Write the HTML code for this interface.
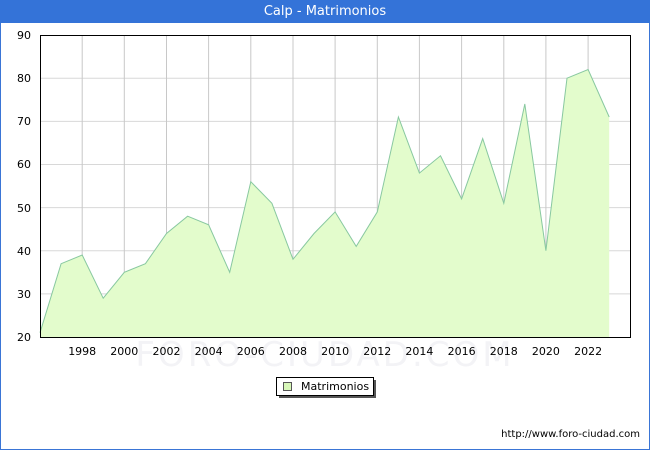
<!DOCTYPE html>
<html><head><meta charset="utf-8"><style>
html,body{margin:0;padding:0;background:#fff;}
body{width:650px;height:450px;position:relative;overflow:hidden;font-family:"DejaVu Sans","Liberation Sans",sans-serif;}
.frame{position:absolute;left:0;top:0;width:648px;height:448px;border:1px solid #3a75d6;}
.bar{position:absolute;left:0;top:0;width:650px;height:23px;background:#3473d8;color:#fff;font-size:13px;text-align:center;line-height:23px;}
svg{position:absolute;left:0;top:0;}
</style></head><body>
<div class="frame"></div>
<div class="bar">Calp - Matrimonios</div>
<svg width="650" height="450" font-family="DejaVu Sans, Liberation Sans, sans-serif" font-size="11">
<g stroke="#d8d8d8" stroke-width="1">
<line x1="40" y1="78.2" x2="630" y2="78.2"/><line x1="40" y1="121.4" x2="630" y2="121.4"/>
<line x1="40" y1="164.5" x2="630" y2="164.5"/><line x1="40" y1="207.6" x2="630" y2="207.6"/>
<line x1="40" y1="250.7" x2="630" y2="250.7"/><line x1="40" y1="293.9" x2="630" y2="293.9"/>
</g>
<g stroke="#c8c8c8" stroke-width="1">
<line x1="82.2" y1="35" x2="82.2" y2="337"/><line x1="124.3" y1="35" x2="124.3" y2="337"/>
<line x1="166.5" y1="35" x2="166.5" y2="337"/><line x1="208.6" y1="35" x2="208.6" y2="337"/>
<line x1="250.8" y1="35" x2="250.8" y2="337"/><line x1="293" y1="35" x2="293" y2="337"/>
<line x1="335.1" y1="35" x2="335.1" y2="337"/><line x1="377.3" y1="35" x2="377.3" y2="337"/>
<line x1="419.4" y1="35" x2="419.4" y2="337"/><line x1="461.6" y1="35" x2="461.6" y2="337"/>
<line x1="503.8" y1="35" x2="503.8" y2="337"/><line x1="545.9" y1="35" x2="545.9" y2="337"/>
<line x1="588.1" y1="35" x2="588.1" y2="337"/>
</g>
<polygon fill="#e3fccc" points="40,337 40,332.7 61.1,263.7 82.2,255 103.2,298.2 124.3,272.3 145.4,263.7 166.5,233.5 187.6,216.2 208.6,224.8 229.7,272.3 250.8,181.7 271.9,203.3 293,259.3 314,233.5 335.1,211.9 356.2,246.4 377.3,211.9 398.4,117 419.4,173.1 440.5,155.8 461.6,198.9 482.7,138.6 503.8,203.3 524.8,104 545.9,250.7 567,78.2 588.1,69.5 609.2,117 609.2,337"/>
<polyline fill="none" stroke="#88c8a0" stroke-width="1" points="40,332.7 61.1,263.7 82.2,255 103.2,298.2 124.3,272.3 145.4,263.7 166.5,233.5 187.6,216.2 208.6,224.8 229.7,272.3 250.8,181.7 271.9,203.3 293,259.3 314,233.5 335.1,211.9 356.2,246.4 377.3,211.9 398.4,117 419.4,173.1 440.5,155.8 461.6,198.9 482.7,138.6 503.8,203.3 524.8,104 545.9,250.7 567,78.2 588.1,69.5 609.2,117"/>
<text x="325" y="366" font-size="34" fill="#f3f3f6" text-anchor="middle" letter-spacing="3">FORO-CIUDAD.COM</text>
<rect x="40.5" y="35.5" width="590" height="302" fill="none" stroke="#000" stroke-width="1"/>
<g fill="#000" text-anchor="end">
<text x="31" y="39">90</text><text x="31" y="82">80</text><text x="31" y="125">70</text>
<text x="31" y="168">60</text><text x="31" y="212">50</text><text x="31" y="255">40</text>
<text x="31" y="298">30</text><text x="31" y="341">20</text>
</g>
<g fill="#000" text-anchor="middle">
<text x="82.2" y="355">1998</text><text x="124.3" y="355">2000</text><text x="166.5" y="355">2002</text>
<text x="208.6" y="355">2004</text><text x="250.8" y="355">2006</text><text x="293" y="355">2008</text>
<text x="335.1" y="355">2010</text><text x="377.3" y="355">2012</text><text x="419.4" y="355">2014</text>
<text x="461.6" y="355">2016</text><text x="503.8" y="355">2018</text><text x="545.9" y="355">2020</text>
<text x="588.1" y="355">2022</text>
</g>
<rect x="279" y="380" width="97" height="18" fill="#555"/>
<rect x="276.5" y="377.5" width="97" height="18" fill="#fff" stroke="#000"/>
<rect x="283.5" y="382.5" width="8" height="8" fill="#d7f7b8" stroke="#555"/>
<text x="301" y="390" font-size="11">Matrimonios</text>
<text x="640" y="437" font-size="10" text-anchor="end">http://www.foro-ciudad.com</text>
</svg>
</body></html>
